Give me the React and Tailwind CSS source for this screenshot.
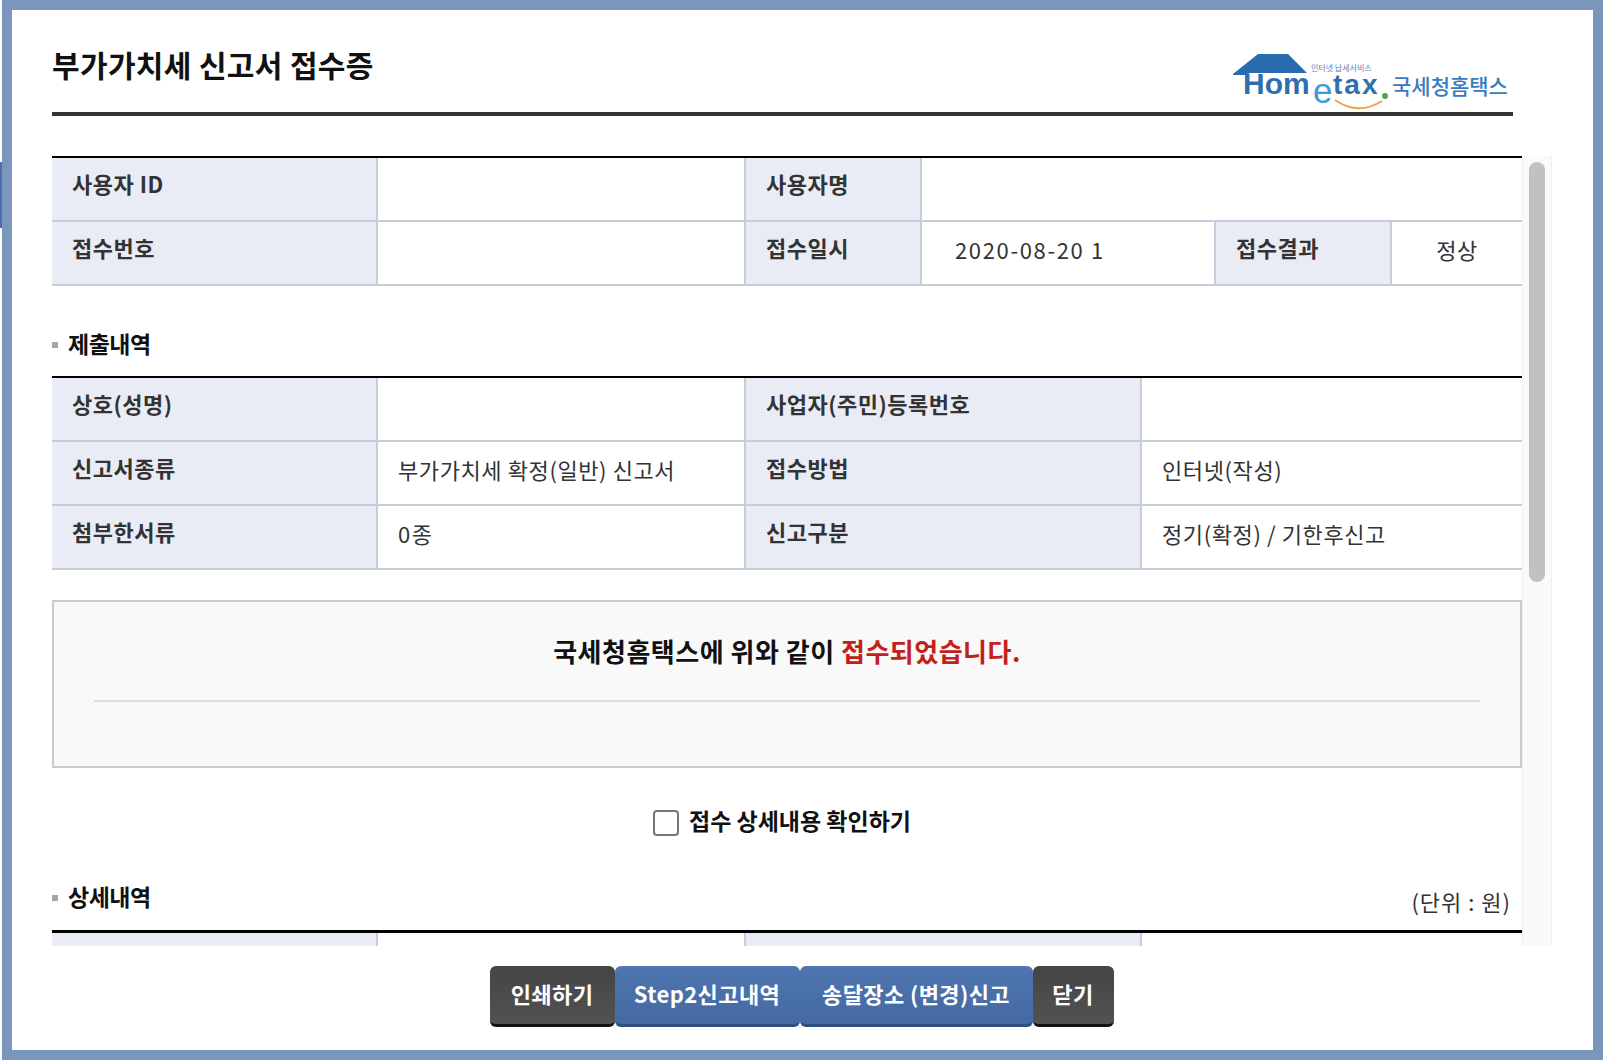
const font = { fontFamily: '"Noto Sans CJK KR", "Noto Sans", sans-serif' }

function Th({ w, children }) {
    return (
        <div className={`${w} shrink-0 bg-[#e9ecf4] border-r-2 border-[#c6cedc] pl-5 pb-[12px] flex items-center text-[22px] font-bold tracking-[0.5px] text-[#333]`}>
            {children}
        </div>
    )
}

function Td({ w, className = '', children }) {
    return (
        <div className={`${w} ${className} pb-[8px] flex items-center text-[22px] tracking-[0.6px] text-[#333]`}>
            {children}
        </div>
    )
}

function Row({ children }) {
    return <div className="flex h-[64px] border-b-2 border-[#c6cedc]">{children}</div>
}

function SectionTitle({ children, right }) {
    return (
        <div className="flex items-center h-[30px]">
            <span className="w-[6px] h-[6px] mt-[3px] bg-[#a6a6a6] mr-[10px]"></span>
            <span className="text-[23px] font-bold tracking-[-0.5px] text-[#111] flex-1">{children}</span>
            {right && <span className="text-[22px] tracking-[1px] text-[#333] mr-[11px] mt-[10px]">{right}</span>}
        </div>
    )
}

function Logo() {
    return (
        <svg width="285" height="62" viewBox="0 0 285 62" className="-mr-[5px]">
            <path d="M0 24 L25 4 H55 L74 23 H17 L13 25 H0 Z" fill="#2b6cb0" />
            <text x="10" y="44" fontSize="30" fontWeight="700" fontFamily="Liberation Sans" fill="#2f6fad">Hom</text>
            <text x="80" y="53" fontSize="35" fontFamily="Liberation Sans" fill="#3d9ad6">e</text>
            <text x="100" y="44" fontSize="28" fontWeight="700" fontFamily="Liberation Sans" fill="#2f6fad" letterSpacing="2">tax</text>
            <circle cx="152" cy="46" r="3" fill="#4aa84e" />
            <path d="M102 50 Q125 66 149 51" stroke="#eda33f" strokeWidth="2" fill="none" />
            <text x="78" y="21" fontSize="8" fontFamily="Noto Sans CJK KR" fill="#5a86b8">인터넷 납세서비스</text>
            <text x="159" y="44" fontSize="21" fontWeight="500" fontFamily="Noto Sans CJK KR" fill="#3a7bbd">국세청홈택스</text>
        </svg>
    )
}

function Button({ w, blue, children }) {
    return (
        <button className={`${w} h-[61px] pb-[4px] rounded-[6px] text-white text-[22px] font-bold tracking-[0.4px] border-b-[3px] ${blue ? 'bg-gradient-to-b from-[#4f76b0] to-[#4469a3] border-[#2f4f80]' : 'bg-gradient-to-b from-[#454545] to-[#525252] border-[#111]'}`}>
            {children}
        </button>
    )
}

export default function App() {
    return (
        <div style={font} className="w-[1604px] h-[1062px] bg-white flex overflow-hidden">
            <div className="w-[2px] h-[1060px] flex flex-col">
                <div className="h-[162px] bg-white"></div>
                <div className="h-[66px] bg-[#4a70ad]"></div>
            </div>
            <div className="w-[1601px] h-[1060px] border-[10px] border-[#7b96bd] bg-white flex flex-col">
                <div className="ml-[40px] mr-[80px] h-[106px] border-b-4 border-[#333] flex items-end justify-between shrink-0">
                    <h1 className="text-[30px] font-bold tracking-[0.35px] text-[#111] mb-[25px]">부가가치세 신고서 접수증</h1>
                    <Logo />
                </div>

                <div className="ml-[40px] mr-[40px] mt-[40px] h-[790px] flex overflow-hidden shrink-0">
                    <div className="w-[1470px] shrink-0">
                        <div className="border-t-2 border-black">
                            <Row>
                                <Th w="w-[326px]">사용자 ID</Th>
                                <Td w="w-[368px] border-r-2 border-[#c6cedc]" />
                                <Th w="w-[176px]">사용자명</Th>
                                <Td w="flex-1" />
                            </Row>
                            <Row>
                                <Th w="w-[326px]">접수번호</Th>
                                <Td w="w-[368px] border-r-2 border-[#c6cedc]" />
                                <Th w="w-[176px]">접수일시</Th>
                                <Td w="w-[294px]" className="pl-[33px] border-r-2 border-[#c6cedc]"><span className="tracking-[1.65px]">2020-08-20 1</span></Td>
                                <Th w="w-[176px]">접수결과</Th>
                                <Td w="flex-1" className="justify-center">정상</Td>
                            </Row>
                        </div>

                        <div className="mt-[42px] mb-[18px]"><SectionTitle>제출내역</SectionTitle></div>

                        <div className="border-t-2 border-black">
                            <Row>
                                <Th w="w-[326px]">상호(성명)</Th>
                                <Td w="w-[368px] border-r-2 border-[#c6cedc]" />
                                <Th w="w-[396px]">사업자(주민)등록번호</Th>
                                <Td w="flex-1" />
                            </Row>
                            <Row>
                                <Th w="w-[326px]">신고서종류</Th>
                                <Td w="w-[368px] border-r-2 border-[#c6cedc]" className="pl-5">부가가치세 확정(일반) 신고서</Td>
                                <Th w="w-[396px]">접수방법</Th>
                                <Td w="flex-1" className="pl-5">인터넷(작성)</Td>
                            </Row>
                            <Row>
                                <Th w="w-[326px]">첨부한서류</Th>
                                <Td w="w-[368px] border-r-2 border-[#c6cedc]" className="pl-5"><span className="tracking-[1.5px]">0종</span></Td>
                                <Th w="w-[396px]">신고구분</Th>
                                <Td w="flex-1" className="pl-5">정기(확정) / 기한후신고</Td>
                            </Row>
                        </div>

                        <div className="mt-[30px] h-[168px] border-2 border-[#ccc] bg-[#f9f9f9] px-[40px] flex flex-col">
                            <p className="h-[100px] pb-[2px] border-b-2 border-[#ddd] flex items-center justify-center text-[26px] font-bold tracking-[0.5px] text-[#111]">
                                국세청홈택스에 위와 같이&nbsp;<span className="text-[#c4201a]">접수되었습니다.</span>
                            </p>
                        </div>

                        <div className="mt-[35px] flex justify-center items-center gap-[10px] pr-[10px]">
                            <span className="w-[26px] h-[26px] mt-[5px] border-2 border-[#777] rounded-[4px] bg-white"></span>
                            <span className="text-[23px] font-bold tracking-[0px] text-[#111]">접수 상세내용 확인하기</span>
                        </div>

                        <div className="mt-[44px] mb-[18px]"><SectionTitle right="(단위 : 원)">상세내역</SectionTitle></div>

                        <div className="border-t-[3px] border-black">
                            <Row>
                                <Th w="w-[326px]"></Th>
                                <Td w="w-[368px] border-r-2 border-[#c6cedc]" />
                                <Th w="w-[396px]"></Th>
                                <Td w="flex-1" />
                            </Row>
                        </div>
                    </div>

                    <div className="w-[30px] shrink-0 bg-[#fafafa] border-x border-[#efefef] pt-[6px] flex justify-center">
                        <div className="w-4 h-[420px] rounded-full bg-[#c1c1c1]"></div>
                    </div>
                </div>

                <div className="flex justify-center items-start mt-[20px] pr-[2px]">
                    <Button w="w-[125px]">인쇄하기</Button>
                    <Button w="w-[185px]" blue>Step2신고내역</Button>
                    <Button w="w-[233px]" blue>송달장소 (변경)신고</Button>
                    <Button w="w-[81px]">닫기</Button>
                </div>
            </div>
        </div>
    )
}
